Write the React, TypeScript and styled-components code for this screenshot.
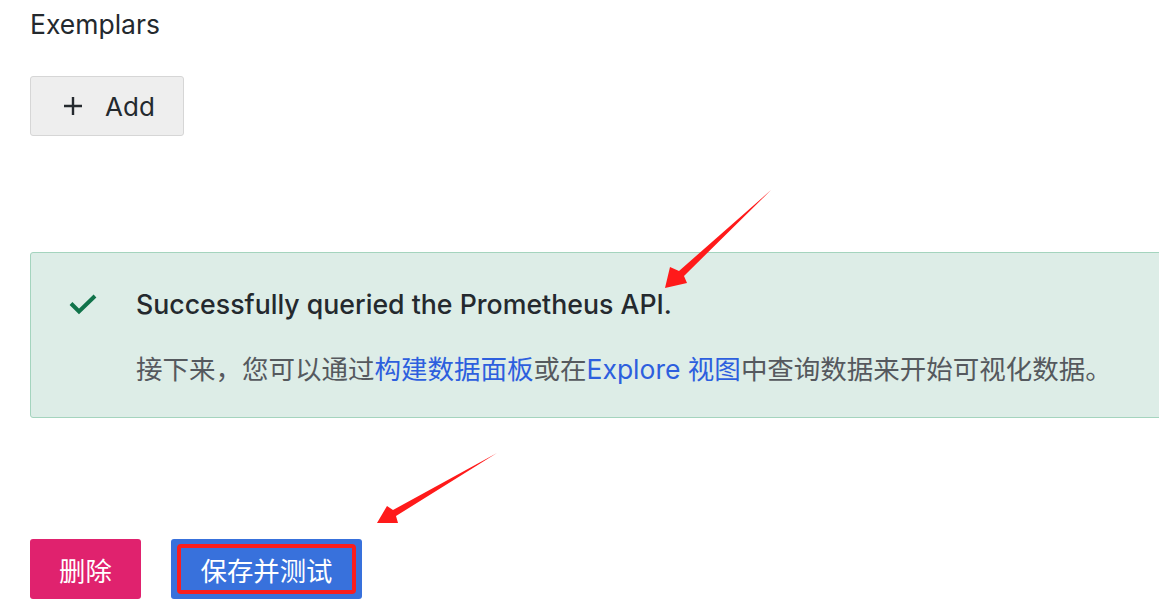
import React from "react";
import styled, { createGlobalStyle } from "styled-components";

const Global = createGlobalStyle`
  html, body { margin: 0; padding: 0; background: #ffffff; }
  body { font-family: Inter, "Noto Sans CJK SC", sans-serif; overflow: hidden; }
`;

const Page = styled.div`
  position: relative;
  width: 1159px;
  height: 610px;
  overflow: hidden;
  padding-left: 30px;
  box-sizing: border-box;
  display: flex;
  flex-direction: column;
  align-items: flex-start;
`;

const Heading = styled.div`
  margin-top: 8px;
  font-size: 26.5px;
  line-height: 32px;
  color: #24292e;
`;

const AddButton = styled.button`
  margin-top: 36px;
  height: 60px;
  width: 154px;
  box-sizing: border-box;
  display: flex;
  align-items: center;
  justify-content: center;
  gap: 22px;
  background: #eeeeee;
  border: 1px solid #d6d6d6;
  border-radius: 3px;
  font-family: Inter, sans-serif;
  font-size: 26px;
  color: #24292e;
  padding: 0 0 0 4px;
`;

const Alert = styled.div`
  margin-top: 116px;
  width: 1200px;
  height: 166px;
  box-sizing: border-box;
  background: #ddede7;
  border: 1px solid #a4d4be;
  border-radius: 3px;
  display: flex;
  align-items: flex-start;
  padding: 35px 0 0 36px;
`;

const IconBox = styled.div`
  width: 31px;
  height: 31px;
  display: flex;
  align-items: center;
  justify-content: center;
  margin-top: 1px;
  margin-right: 38px;
`;

const AlertBody = styled.div`
  display: flex;
  flex-direction: column;
`;

const AlertTitle = styled.div`
  font-size: 26.7px;
  line-height: 32px;
  color: #24292e;
  font-weight: 500;
`;

const AlertText = styled.div`
  margin-top: 33px;
  font-size: 26.5px;
  line-height: 32px;
  color: #55595e;
  white-space: nowrap;
`;

const Link = styled.a`
  color: #2d5fde;
  text-decoration: none;
`;

const Actions = styled.div`
  margin-top: 121px;
  display: flex;
  gap: 30px;
`;

const ActionButton = styled.button<{ $bg: string; $w: number }>`
  height: 60px;
  width: ${(p) => p.$w}px;
  box-sizing: border-box;
  background: ${(p) => p.$bg};
  border: none;
  border-radius: 3px;
  color: #ffffff;
  font-family: Inter, "Noto Sans CJK SC", sans-serif;
  font-size: 26.4px;
  display: flex;
  align-items: center;
  justify-content: center;
  padding: 0;
`;

const Highlight = styled.span`
  display: flex;
  align-items: center;
  justify-content: center;
  width: 179px;
  height: 50px;
  box-sizing: border-box;
  border: 4px solid #fa1e1e;
  border-radius: 4px;
`;

const Arrows = styled.svg`
  position: absolute;
  left: 0;
  top: 0;
  pointer-events: none;
`;

export default function App() {
  return (
    <Page>
      <Global />
      <Heading>Exemplars</Heading>
      <AddButton>
        <svg width="20" height="20" viewBox="0 0 20 20">
          <path d="M10 1v18M1 10h18" stroke="#24292e" strokeWidth="2.4" />
        </svg>
        <span>Add</span>
      </AddButton>
      <Alert>
        <IconBox>
          <svg width="28" height="22" viewBox="0 0 28 22">
            <path d="M2 9.5l8 8L26 2" fill="none" stroke="#10734a" strokeWidth="4" />
          </svg>
        </IconBox>
        <AlertBody>
          <AlertTitle>Successfully queried the Prometheus API.</AlertTitle>
          <AlertText>
            接下来，您可以通过<Link>构建数据面板</Link>或在<Link>Explore 视图</Link>中查询数据来开始可视化数据。
          </AlertText>
        </AlertBody>
      </Alert>
      <Actions>
        <ActionButton $bg="#e0226e" $w={111}>删除</ActionButton>
        <ActionButton $bg="#3871dc" $w={191}>
          <Highlight>保存并测试</Highlight>
        </ActionButton>
      </Actions>
      <Arrows width="1159" height="610" viewBox="0 0 1159 610">
        <polygon points="771,190 684,276 687,283 665,288 670,267 679,271" fill="#ff1a1a" />
        <polygon points="497,453 396,516 398,523 377,523 387,506 393,510" fill="#ff1a1a" />
      </Arrows>
    </Page>
  );
}
